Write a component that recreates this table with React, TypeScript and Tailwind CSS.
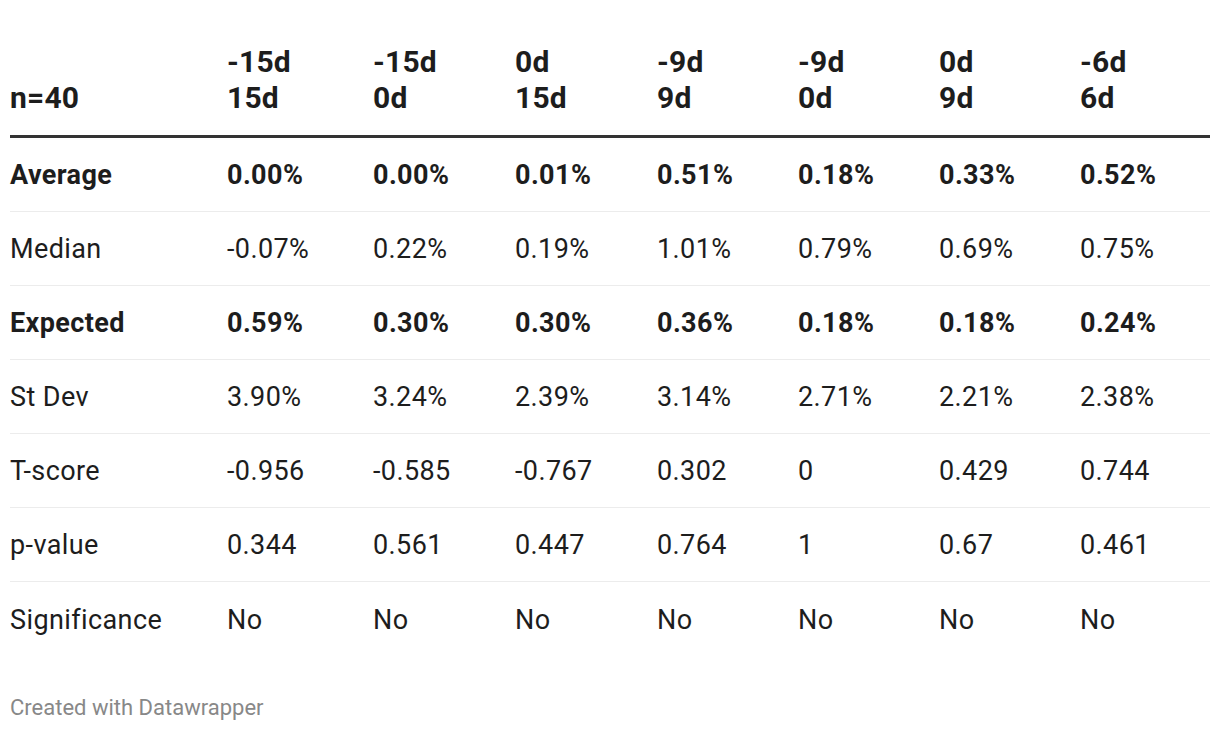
const cols = ["n=40", ["-15d", "15d"], ["-15d", "0d"], ["0d", "15d"], ["-9d", "9d"], ["-9d", "0d"], ["0d", "9d"], ["-6d", "6d"]];

const rows: { label: string; bold?: boolean; values: string[] }[] = [
  { label: "Average", bold: true, values: ["0.00%", "0.00%", "0.01%", "0.51%", "0.18%", "0.33%", "0.52%"] },
  { label: "Median", values: ["-0.07%", "0.22%", "0.19%", "1.01%", "0.79%", "0.69%", "0.75%"] },
  { label: "Expected", bold: true, values: ["0.59%", "0.30%", "0.30%", "0.36%", "0.18%", "0.18%", "0.24%"] },
  { label: "St Dev", values: ["3.90%", "3.24%", "2.39%", "3.14%", "2.71%", "2.21%", "2.38%"] },
  { label: "T-score", values: ["-0.956", "-0.585", "-0.767", "0.302", "0", "0.429", "0.744"] },
  { label: "p-value", values: ["0.344", "0.561", "0.447", "0.764", "1", "0.67", "0.461"] },
  { label: "Significance", values: ["No", "No", "No", "No", "No", "No", "No"] },
];

const grid = "grid grid-cols-[217px_146px_142px_142px_141px_141px_141px_130px]";

export default function App() {
  return (
    <div className="w-[1220px] h-[730px] bg-white px-[10px] text-[#1d1d1d] font-['Roboto',sans-serif]">
      {/* header */}
      <div className={`${grid} items-end pt-[44px] pb-[19px] border-b-[3px] border-[#333] text-[30px] leading-[36px] tracking-[0.2px] font-bold`}>
        {cols.map((c, i) => (
          <div key={i}>
            {Array.isArray(c) ? (
              <>
                <div>{c[0]}</div>
                <div>{c[1]}</div>
              </>
            ) : (
              <div>{c}</div>
            )}
          </div>
        ))}
      </div>

      {/* body */}
      {rows.map((r, i) => (
        <div
          key={r.label}
          className={`${grid} items-center h-[74px] pt-[2px] text-[27px] tracking-[0.4px] ${i < rows.length - 1 ? "border-b border-[#ececec]" : ""} ${r.bold ? "font-bold" : ""}`}
        >
          <div>{r.label}</div>
          {r.values.map((v, j) => (
            <div key={j}>{v}</div>
          ))}
        </div>
      ))}

      <div className="mt-[35px] text-[22px] text-[#888]">Created with Datawrapper</div>
    </div>
  );
}
